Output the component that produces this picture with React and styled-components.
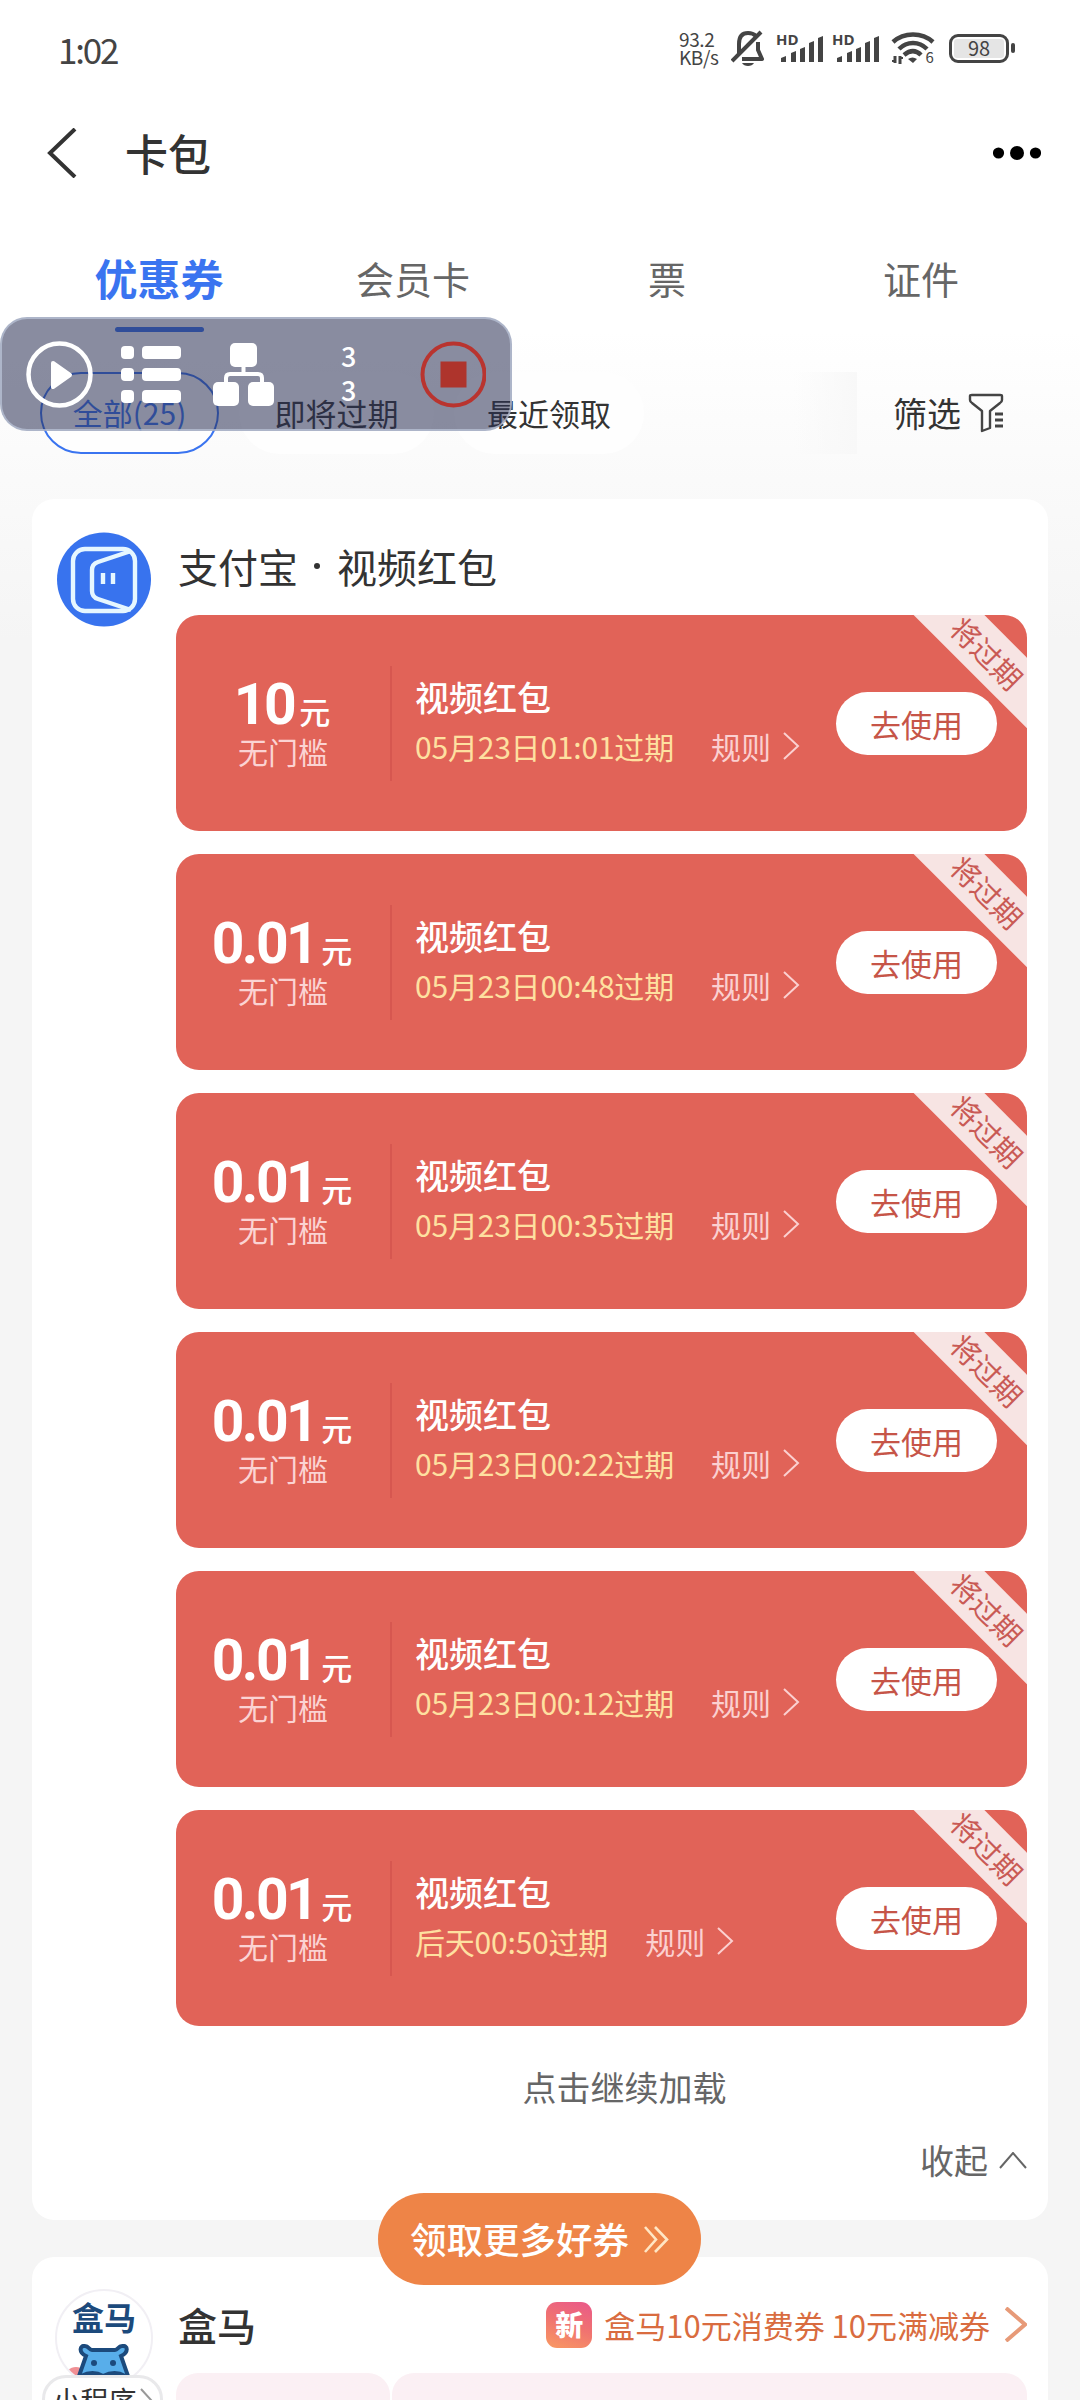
import React from 'react';
import styled, { createGlobalStyle, css } from 'styled-components';

const GlobalStyle = createGlobalStyle`
  * {
    box-sizing: border-box;
  }

  body {
    margin: 0;
    background-color: #f5f5f5;
    font-family: 'Noto Sans CJK SC', sans-serif;
    color: #333;
  }
`;

const StyledPage = styled.div`
  width: 1080px;
  height: 2400px;
  overflow: hidden;
  position: relative;
  display: flex;
  flex-direction: column;
  background: linear-gradient(#fff 0, #fff 330px, #fafafa 480px, #f5f5f5 640px);

  > * {
    flex-shrink: 0;
  }
`;

const StyledText = styled.span`
  font-size: ${({ $size }) => $size}px;
  line-height: 1;
  white-space: nowrap;
  color: ${({ $color }) => $color || 'inherit'};
  font-weight: ${({ $weight }) => $weight || 400};
  letter-spacing: ${({ $spacing }) => $spacing || 0}px;
`;

const StyledStatusBar = styled.header`
  height: 98px;
  padding: 0 65px 2px 58px;
  display: flex;
  align-items: center;
  justify-content: space-between;
  color: #444;
`;

const StyledStatusIcons = styled.div`
  display: flex;
  align-items: center;
`;

const StyledSpeed = styled.div`
  width: 42px;
  margin-right: 10px;
  display: flex;
  flex-direction: column;
  font-size: 19px;
  line-height: 18px;
  letter-spacing: -0.4px;
`;

const StyledTitleBar = styled.div`
  height: 110px;
  padding: 0 39px 0 47px;
  display: flex;
  align-items: center;
`;

const StyledTitle = styled.h1`
  flex: 1;
  margin: 0 0 0 48px;
  padding-bottom: 2px;
  font-size: 43px;
  font-weight: 500;
  line-height: 1;
`;

const StyledTabs = styled.nav`
  height: 132px;
  padding: 42px 32px 0;
  display: grid;
  grid-template-columns: repeat(4, 254px);
`;

const StyledTab = styled.div`
  height: 82px;
  display: flex;
  flex-direction: column;
  align-items: center;
  justify-content: space-between;
  font-size: 38px;
  line-height: 56px;
  color: #666;

  ${({ $active }) =>
    $active &&
    css`
      font-size: 43px;
      line-height: 54px;
      font-weight: 700;
      color: #3a74f0;

      &::after {
        content: '';
        width: 89px;
        height: 5px;
        border-radius: 3px;
        background-color: #3a74f0;
      }
    `}
`;

const StyledFilters = styled.div`
  height: 127px;
  margin-top: 32px;
  padding: 0 76px 0 40px;
  display: flex;
  align-items: flex-start;
`;

const StyledChip = styled.div`
  width: ${({ $width }) => $width}px;
  height: 82px;
  margin-right: 20px;
  padding-bottom: 2px;
  border-radius: 41px;
  display: flex;
  align-items: center;
  justify-content: center;
  font-size: 31px;
  white-space: nowrap;
  background-color: #fefefe;

  ${({ $active }) =>
    $active &&
    css`
      border: 2px solid #3a74f0;
      font-size: 30px;
      color: #3a74f0;
    `}
`;

const StyledFade = styled.div`
  width: 63px;
  height: 82px;
  margin-left: auto;
  margin-right: 36px;
  background: linear-gradient(90deg, rgba(248, 248, 248, 0), #f8f8f8);
`;

const StyledFilterButton = styled.div`
  height: 82px;
  display: flex;
  align-items: center;
  gap: 7px;
`;

const StyledCard = styled.section`
  width: 1016px;
  height: ${({ $height }) => $height}px;
  margin: 0 32px 37px;
  padding: 33px 21px 0 25px;
  border-radius: 22px;
  background-color: #fff;
  display: grid;
  grid-template-columns: 94px 851px;
  column-gap: 25px;
  align-items: start;
`;

const StyledCardBody = styled.div`
  display: flex;
  flex-direction: column;
`;

const StyledCardHeader = styled.div`
  height: 83px;
  display: flex;
  align-items: center;
  padding-left: 2px;
  padding-bottom: ${({ $bottom }) => $bottom}px;
`;

const StyledDot = styled.span`
  width: 6px;
  height: 6px;
  margin: 0 17px 0 16px;
  border-radius: 50%;
  background-color: #333;
`;

const StyledCoupon = styled.article`
  position: relative;
  overflow: hidden;
  height: 216px;
  margin-bottom: 23px;
  padding-right: 30px;
  border-radius: 23px;
  background-color: #e16358;
  display: flex;
  align-items: center;
`;

const StyledAmount = styled.div`
  width: 214px;
  padding-bottom: 4px;
  display: flex;
  flex-direction: column;
  align-items: center;
  gap: 9px;
`;

const StyledPrice = styled.div`
  display: flex;
  align-items: baseline;
  height: 50px;
  padding-right: 2px;
  color: #fff;
`;

const StyledNumber = styled.span`
  margin-right: 5px;
  font-family: Roboto, sans-serif;
  font-size: 57px;
  font-weight: 700;
  line-height: 56px;
  letter-spacing: -2.5px;
`;

const StyledDivider = styled.div`
  width: 2px;
  height: 115px;
  background-color: #d65750;
`;

const StyledInfo = styled.div`
  flex: 1;
  padding-left: 23px;
  padding-bottom: 5px;
  display: flex;
  flex-direction: column;
  gap: 17px;
`;

const StyledMeta = styled.div`
  display: flex;
  align-items: center;
`;

const StyledRule = styled.div`
  margin-left: 37px;
  display: flex;
  align-items: center;
  gap: 12px;
  color: #fbd0d0;
`;

const StyledUseButton = styled.button`
  width: 161px;
  height: 63px;
  padding: 0;
  border: 0;
  border-radius: 32px;
  background-color: #fff;
  font-family: inherit;
  font-size: 31px;
  line-height: 61px;
  color: #c65548;
`;

const StyledRibbon = styled.div`
  position: absolute;
  top: 13px;
  right: -60px;
  width: 200px;
  height: 50px;
  transform: rotate(45deg);
  background-color: #f7e4e3;
  color: #c95a55;
  font-size: 29px;
  line-height: 49px;
  text-align: center;
`;

const StyledLoadMore = styled.div`
  margin-top: 20px;
  padding-left: 46px;
  text-align: center;
  font-size: 34px;
  line-height: 36px;
  color: #666;
`;

const StyledCollapse = styled.div`
  margin-top: 38px;
  display: flex;
  align-items: center;
  justify-content: flex-end;
  gap: 11px;
  color: #666;
`;

const StyledPromo = styled.div`
  margin-left: auto;
  display: flex;
  align-items: center;
  color: #d96c40;

  svg {
    margin-left: 15px;
  }
`;

const StyledNewBadge = styled.span`
  width: 46px;
  height: 46px;
  margin-right: 12px;
  border-radius: 11px;
  background: linear-gradient(200deg, #e9588a, #f07370 50%, #f99a62);
  color: #fff;
  font-size: 28px;
  font-weight: 900;
  line-height: 45px;
  text-align: center;
`;

const StyledPinkRow = styled.div`
  height: 110px;
  display: grid;
  grid-template-columns: 214px 635px;
  gap: 2px;
`;

const StyledPinkBox = styled.div`
  border-radius: 22px;
  background-color: #fbf0f4;
`;

const StyledShop = styled.div`
  position: relative;
  width: 98px;
  height: 98px;
  margin: -1px -2px;
`;

const StyledShopLogo = styled.div`
  position: relative;
  width: 98px;
  height: 98px;
  padding-top: 9px;
  overflow: hidden;
  border: 2px solid #f1eff4;
  border-radius: 50%;
  display: flex;
  flex-direction: column;
  align-items: center;
  gap: 12px;

  svg {
    flex-shrink: 0;
  }

  &::before {
    content: '';
    position: absolute;
    top: 76px;
    left: 8px;
    width: 22px;
    height: 22px;
    border-radius: 50%;
    background-color: #f08f94;
  }
`;

const StyledHippo = styled.svg`
  position: relative;
`;

const StyledMiniApp = styled.div`
  position: absolute;
  top: 86px;
  left: -13px;
  width: 121px;
  height: 52px;
  padding-bottom: 2px;
  border: 3px solid #e9e9eb;
  border-radius: 24px;
  background-color: #fff;
  display: flex;
  align-items: center;
  justify-content: center;
  gap: 3px;
`;

const StyledMoreButton = styled.button`
  position: absolute;
  top: 2193px;
  left: 378px;
  width: 323px;
  height: 92px;
  padding: 0;
  border: 0;
  border-radius: 46px;
  background-color: #ee8447;
  font-family: inherit;
  color: #fff;
  display: flex;
  align-items: center;
  justify-content: center;
  gap: 14px;
`;

const StyledRecorder = styled.div`
  position: absolute;
  top: 317px;
  left: 0;
  width: 512px;
  height: 114px;
  padding: 0 24px;
  border: 2px solid rgba(185, 195, 215, 0.75);
  border-radius: 27px;
  background-color: rgba(40, 45, 82, 0.55);
  display: flex;
  align-items: center;
`;

const StyledCounter = styled.div`
  width: 20px;
  margin: 0 61px 2px 65px;
  display: flex;
  flex-direction: column;
  align-items: center;
  font-size: 27px;
  font-weight: 500;
  line-height: 34px;
  color: #fff;
`;

const Chevron = ({ width, height, color = 'currentColor', stroke = 2, direction = 'right' }) => {
  const points = {
    right: `1,1 ${width - 2},${height / 2} 1,${height - 1}`,
    left: `${width - 2},1 3,${height / 2} ${width - 2},${height - 1}`,
    up: `1,${height - 1} ${width / 2},1 ${width - 1},${height - 1}`,
  };

  return (
    <svg width={width} height={height} fill="none" stroke={color} strokeWidth={stroke}>
      <polyline points={points[direction]} />
    </svg>
  );
};

const BellOffIcon = () => (
  <svg width="34" height="37" fill="none" stroke="#444" strokeWidth="4">
    <path d="M8 23V14C8 6 12 3 17 3c4 0 6 1 8 3" />
    <path d="M27 12v8l4 9H11" strokeLinejoin="round" />
    <path d="M1 31L30 2" />
    <path d="M11 33h12c-2 4-10 4-12 0z" fill="#444" stroke="none" />
  </svg>
);

const StyledSignal = styled.div`
  position: relative;
  width: 47px;
  height: 30px;
  margin-left: ${({ $left }) => $left}px;

  span {
    position: absolute;
    top: -1px;
    left: 0;
    font: 700 15px/15px 'Open Sans', sans-serif;
  }
`;

const Signal = ({ left }) => (
  <StyledSignal $left={left}>
    <span>HD</span>
    <svg width="47" height="30" fill="#444">
      <path d="M5 29v-4l5-2v6zM15 20l5-2v11h-5zM24 16l5-2v15h-5zM33 10l5-2v21h-5zM42 5l5-2v26h-5z" />
    </svg>
  </StyledSignal>
);

const StyledWifi = styled.svg`
  margin-left: 12px;
  margin-right: 14px;
  font-family: 'Noto Sans CJK SC', sans-serif;
`;

const WifiIcon = () => (
  <StyledWifi width="44" height="34" fill="none" stroke="#444" strokeWidth="4.5">
    <path d="M2 11C13 1 31 1 42 11M8 18c8-8 20-8 28 0M13 24c6-5 12-5 17 0" />
    <path d="M17 28c3-2 6-2 9 0l-4 4z" fill="#444" stroke="none" />
    <path d="M4 25v7M9 25v8" strokeWidth="3" />
    <path d="M1 30h4M8 27h4" strokeWidth="2" />
    <text x="34.500" y="32" fontSize="15" fill="#444" stroke="none">
      6
    </text>
  </StyledWifi>
);

const StyledBattery = styled.div`
  width: 60px;
  height: 29px;
  padding: 2px;
  border: 3px solid #444;
  border-radius: 9px;

  div {
    height: 19px;
    border-radius: 3px;
    background-color: #e5e5e5;
    text-align: center;
    font-size: 20px;
    line-height: 17px;
  }
`;

const StyledBatteryTip = styled.div`
  width: 4px;
  height: 10px;
  margin-left: 2px;
  border-radius: 2px;
  background-color: #444;
`;

const DotsIcon = () => (
  <svg width="48" height="14">
    <circle cx="5.5" cy="7" r="5.6" />
    <circle cx="24" cy="7" r="7" />
    <circle cx="42.5" cy="7" r="5.6" />
  </svg>
);

const FilterIcon = () => (
  <svg width="36" height="40" fill="none" stroke="#444" strokeWidth="2.4" strokeLinejoin="round">
    <path d="M2 3Q2 2 4 2h28q2 0 2 1v4q0 2-2 3l-10 8v17l-8 3V18L4 10Q2 9 2 7z" />
    <path d="M27 21h8M27 27h8M27 33h8" strokeWidth="3" />
  </svg>
);

const WalletLogo = () => (
  <svg width="94" height="95" fill="none" stroke="#e6f7ff" strokeWidth="4.4">
    <circle cx="47" cy="47.5" r="47" fill="#3873ee" stroke="none" />
    <rect x="16" y="17" width="62" height="62" rx="12" />
    <path d="M74 19L41 30q-6 2-6 8v21q0 6 6 8l33 11" />
    <path d="M46 41v11M56 41v11" />
  </svg>
);

const HippoIcon = () => (
  <StyledHippo width="54" height="42" viewBox="0 0 54 42" fill="#58aeea" stroke="#1c4a7c" strokeWidth="4">
    <path d="M9 12C1 8 3 1 8 2c4 0 4 4 7 4h23c3 0 3-4 7-4 6-1 7 6-1 10l7 20v12H2V32z" />
    <path d="M4 32q12-6 22 0 12-6 22 0" />
    <circle cx="17" cy="19" r="3" fill="#1c4a7c" stroke="none" />
    <circle cx="36" cy="19" r="3" fill="#1c4a7c" stroke="none" />
  </StyledHippo>
);

const PlayIcon = () => (
  <svg width="67" height="67">
    <circle cx="33.5" cy="33.5" r="31" fill="none" stroke="#fff" strokeWidth="4.5" />
    <path d="M27 22L44 34L27 46z" fill="#fff" stroke="#fff" strokeWidth="4" strokeLinejoin="round" />
  </svg>
);

const StyledListIcon = styled.svg`
  margin-left: 28px;
`;

const ListIcon = () => (
  <StyledListIcon width="61" height="57" fill="#fff">
    {[0, 22, 44].map((y) => (
      <g key={y}>
        <rect x="0" y={y} width="13" height="13" rx="4" />
        <rect x="21" y={y} width="39" height="13" rx="4" />
      </g>
    ))}
  </StyledListIcon>
);

const StyledTreeIcon = styled.svg`
  margin-left: 32px;
`;

const TreeIcon = () => (
  <StyledTreeIcon width="61" height="63" fill="#fff">
    <rect x="17" y="0" width="27" height="24" rx="5" />
    <rect x="0" y="39" width="26" height="24" rx="5" />
    <rect x="35" y="39" width="26" height="24" rx="5" />
    <path d="M30.5 22v9M13 41v-6q0-4 4-4h28q4 0 4 4v6" fill="none" stroke="#fff" strokeWidth="4" />
  </StyledTreeIcon>
);

const StopIcon = () => (
  <svg width="67" height="67">
    <circle cx="33.5" cy="33.5" r="31" fill="none" stroke="#b9342f" strokeWidth="4" />
    <rect x="20.5" y="20.5" width="26" height="26" fill="#ae342c" />
  </svg>
);

const coupons = [
  { amount: '10', expires: '05月23日01:01过期' },
  { amount: '0.01', expires: '05月23日00:48过期' },
  { amount: '0.01', expires: '05月23日00:35过期' },
  { amount: '0.01', expires: '05月23日00:22过期' },
  { amount: '0.01', expires: '05月23日00:12过期' },
  { amount: '0.01', expires: '后天00:50过期' },
];

const Coupon = ({ amount, expires }) => (
  <StyledCoupon>
    <StyledAmount>
      <StyledPrice>
        <StyledNumber>{amount}</StyledNumber>
        <StyledText $size={31} $weight={500}>
          元
        </StyledText>
      </StyledPrice>
      <StyledText $size={30} $color="#fbd3d3">
        无门槛
      </StyledText>
    </StyledAmount>
    <StyledDivider />
    <StyledInfo>
      <StyledText $size={34} $weight={500} $color="#fff">
        视频红包
      </StyledText>
      <StyledMeta>
        <StyledText $size={30} $color="#fee0a0" $spacing={-0.2}>
          {expires}
        </StyledText>
        <StyledRule>
          <StyledText $size={30}>规则</StyledText>
          <Chevron width={17} height={28} />
        </StyledRule>
      </StyledMeta>
    </StyledInfo>
    <StyledUseButton>去使用</StyledUseButton>
    <StyledRibbon>将过期</StyledRibbon>
  </StyledCoupon>
);

const App = () => {
  return (
    <>
      <GlobalStyle />
      <StyledPage>
        <StyledStatusBar>
          <StyledText $size={35} $spacing={-2.2}>
            1:02
          </StyledText>
          <StyledStatusIcons>
            <StyledSpeed>
              <span>93.2</span>
              <span>KB/s</span>
            </StyledSpeed>
            <BellOffIcon />
            <Signal left={11} />
            <Signal left={9} />
            <WifiIcon />
            <StyledBattery>
              <div>98</div>
            </StyledBattery>
            <StyledBatteryTip />
          </StyledStatusIcons>
        </StyledStatusBar>
        <StyledTitleBar>
          <Chevron width={30} height={50} stroke={4} direction="left" />
          <StyledTitle>卡包</StyledTitle>
          <DotsIcon />
        </StyledTitleBar>
        <StyledTabs>
          <StyledTab $active>优惠券</StyledTab>
          <StyledTab>会员卡</StyledTab>
          <StyledTab>票</StyledTab>
          <StyledTab>证件</StyledTab>
        </StyledTabs>
        <StyledFilters>
          <StyledChip $active $width={179}>
            全部(25)
          </StyledChip>
          <StyledChip $width={195}>即将过期</StyledChip>
          <StyledChip $width={190}>最近领取</StyledChip>
          <StyledFade />
          <StyledFilterButton>
            <StyledText $size={34}>筛选</StyledText>
            <FilterIcon />
          </StyledFilterButton>
        </StyledFilters>
        <StyledCard $height={1721}>
          <WalletLogo />
          <StyledCardBody>
            <StyledCardHeader $bottom={15}>
              <StyledText $size={40}>支付宝</StyledText>
              <StyledDot />
              <StyledText $size={40}>视频红包</StyledText>
            </StyledCardHeader>
            {coupons.map((coupon) => (
              <Coupon key={coupon.expires} {...coupon} />
            ))}
            <StyledLoadMore>点击继续加载</StyledLoadMore>
            <StyledCollapse>
              <StyledText $size={34}>收起</StyledText>
              <Chevron width={28} height={17} direction="up" />
            </StyledCollapse>
          </StyledCardBody>
        </StyledCard>
        <StyledCard $height={300}>
          <StyledShop>
            <StyledShopLogo>
              <StyledText $size={32} $weight={700} $color="#1c4a7c">
                盒马
              </StyledText>
              <HippoIcon />
            </StyledShopLogo>
            <StyledMiniApp>
              <StyledText $size={28}>小程序</StyledText>
              <Chevron width={13} height={24} color="#999" />
            </StyledMiniApp>
          </StyledShop>
          <StyledCardBody>
            <StyledCardHeader $bottom={14}>
              <StyledText $size={39} $weight={500}>
                盒马
              </StyledText>
              <StyledPromo>
                <StyledNewBadge>新</StyledNewBadge>
                <StyledText $size={31}>盒马10元消费券 10元满减券</StyledText>
                <Chevron width={22} height={35} color="#e79a78" stroke={4} />
              </StyledPromo>
            </StyledCardHeader>
            <StyledPinkRow>
              <StyledPinkBox />
              <StyledPinkBox />
            </StyledPinkRow>
          </StyledCardBody>
        </StyledCard>
        <StyledMoreButton>
          <StyledText $size={36.5} $weight={500}>
            领取更多好券
          </StyledText>
          <svg width="26" height="27" fill="none" stroke="#ffe6c4" strokeWidth="2.6">
            <path d="M2 1l11 12.500L2 26M12 1l12 12.500L12 26" />
          </svg>
        </StyledMoreButton>
        <StyledRecorder>
          <PlayIcon />
          <ListIcon />
          <TreeIcon />
          <StyledCounter>
            <span>3</span>
            <span>3</span>
          </StyledCounter>
          <StopIcon />
        </StyledRecorder>
      </StyledPage>
    </>
  );
};

export default App;
